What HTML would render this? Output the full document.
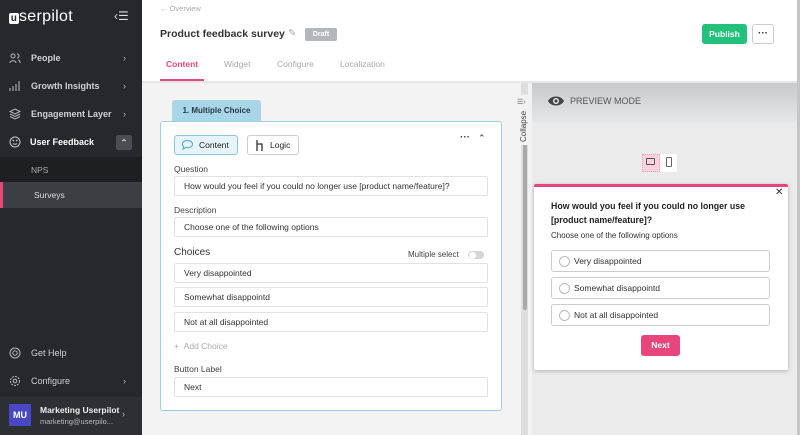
<!DOCTYPE html>
<html><head><meta charset="utf-8"><style>
*{box-sizing:border-box;margin:0;padding:0}
body{width:800px;height:435px;overflow:hidden;font-family:"Liberation Sans",sans-serif;background:#f3f3f3;position:relative;font-size:9px;color:#333}
.a{position:absolute}
.sb{left:0;top:0;width:142px;height:435px;background:#25282d;color:#cfd1d4}
.nav{position:absolute;left:0;width:142px;height:26px;font-size:9px;font-weight:bold;display:flex;align-items:center;padding-left:31px}
.nav .ch{position:absolute;right:16px;font-weight:normal;color:#bbb}
.nav .ic{position:absolute;left:9px;top:7px;width:12px;height:12px}
.inp{position:absolute;left:174px;width:314px;height:20px;background:#fff;border:1px solid #e2e2e2;border-radius:2px;font-size:8.5px;padding-left:9px;line-height:18px;color:#333}
.lbl{position:absolute;left:174px;font-size:8.5px;color:#444}
.opt{position:absolute;left:551px;width:219px;height:22px;border:1px solid #ccc;border-radius:3px;background:#fff;font-size:8.5px;line-height:20px;padding-left:22px}
.opt:before{content:"";position:absolute;left:7px;top:5px;width:9px;height:9px;border:1px solid #bbb;border-radius:50%}
</style></head><body>
<div class="a sb">
 <div class="a" style="left:9px;top:8px;font-size:16px;color:#fff;letter-spacing:.3px"><span style="display:inline-block;width:10px;height:11px;background:#fff;color:#25282d;font-size:10px;line-height:11px;text-align:center;border-radius:2px;font-weight:bold">u</span>serpilot</div>
 <div class="a" style="left:114px;top:9px;font-size:12px;color:#ddd">‹☰</div>
 <div class="nav" style="top:45px"><svg class="ic" viewBox="0 0 12 12" fill="none" stroke="#bbb"><circle cx="4" cy="4" r="2"/><path d="M1 11c0-3 6-3 6 0M8 2a2 2 0 010 4M9 8c2 0 2 2 2 3"/></svg>People<span class="ch">›</span></div>
 <div class="nav" style="top:73px"><svg class="ic" viewBox="0 0 12 12" stroke="#bbb"><path d="M1 11v-3M4 11v-5M7 11v-7M10 11v-10"/></svg>Growth Insights<span class="ch">›</span></div>
 <div class="nav" style="top:101px"><svg class="ic" viewBox="0 0 12 12" fill="none" stroke="#bbb"><path d="M6 1l5 2.5-5 2.5-5-2.5zM1 6l5 2.5 5-2.5M1 8.5l5 2.5 5-2.5"/></svg>Engagement Layer<span class="ch">›</span></div>
 <div class="nav" style="top:129px;color:#fff;padding-left:30px"><svg class="ic" viewBox="0 0 12 12" fill="none" stroke="#ccc"><circle cx="6" cy="6" r="5"/><path d="M4 7.5c1 1 3 1 4 0"/><circle cx="4.3" cy="4.5" r=".4"/><circle cx="7.7" cy="4.5" r=".4"/></svg>User Feedback<span style="position:absolute;left:116px;top:6px;width:16px;height:15px;background:#4a4d52;border-radius:2px;text-align:center;color:#ddd;font-size:8px;line-height:15px">⌃</span></div>
 <div class="a" style="left:0;top:157px;width:142px;height:25px;background:#1d1f23;font-size:8.5px;color:#aaa;padding:8px 0 0 31px">NPS</div>
 <div class="a" style="left:0;top:182px;width:142px;height:26px;background:#3b3e43;font-size:8.5px;color:#ddd;padding:8px 0 0 31px;border-left:3px solid #e8457a">Surveys</div>
 <div class="nav" style="top:340px;font-weight:normal"><svg class="ic" viewBox="0 0 12 12" fill="none" stroke="#bbb"><circle cx="6" cy="6" r="5"/><circle cx="6" cy="6" r="2.2"/></svg>Get Help</div>
 <div class="nav" style="top:368px;font-weight:normal"><svg class="ic" viewBox="0 0 12 12" fill="none" stroke="#bbb"><circle cx="6" cy="6" r="4.5" stroke-dasharray="2 1"/><circle cx="6" cy="6" r="1.8"/></svg>Configure<span class="ch">›</span></div>
 <div class="a" style="left:0;top:397px;width:142px;height:38px;background:#2c2f34"></div>
 <div class="a" style="left:9px;top:404px;width:22px;height:22px;background:#4a47c4;color:#fff;font-size:9px;font-weight:bold;text-align:center;line-height:22px">MU</div>
 <div class="a" style="left:40px;top:405px;font-size:8.5px;font-weight:bold;color:#eee">Marketing Userpilot</div>
 <div class="a" style="left:40px;top:417px;font-size:7.5px;color:#bbb">marketing@userpilo...</div>
 <div class="a" style="left:122px;top:409px;color:#bbb">›</div>
</div>
<div class="a" style="left:142px;top:0;width:658px;height:83px;background:#fff;border-bottom:2px solid #e6e6e6"></div>
<div class="a" style="left:160px;top:4px;font-size:7.5px;color:#aaa">← Overview</div>
<div class="a" style="left:160px;top:28px;font-size:10.5px;font-weight:bold;color:#333">Product feedback survey</div>
<div class="a" style="left:288px;top:28px;color:#aaa;font-size:10px">✎</div>
<div class="a" style="left:305px;top:28px;width:32px;height:13px;background:#b3b6ba;border-radius:2px;color:#fff;font-size:7px;font-weight:bold;text-align:center;line-height:13px">Draft</div>
<div class="a" style="left:702px;top:24px;width:45px;height:20px;background:#22c17c;border-radius:3px;color:#fff;font-size:8.5px;font-weight:bold;text-align:center;line-height:20px">Publish</div>
<div class="a" style="left:752px;top:24px;width:22px;height:20px;border:1px solid #ccc;border-radius:3px;background:#fff;font-size:10px;text-align:center;line-height:18px;font-weight:bold">···</div>
<div class="a" style="left:166px;top:59px;font-size:8.5px;font-weight:bold;color:#e8457a">Content</div>
<div class="a" style="left:160px;top:79px;width:44px;height:2px;background:#e8457a"></div>
<div class="a" style="left:224px;top:59px;font-size:8.5px;color:#aaa">Widget</div>
<div class="a" style="left:277px;top:59px;font-size:8.5px;color:#aaa">Configure</div>
<div class="a" style="left:340px;top:59px;font-size:8.5px;color:#aaa">Localization</div>

<div class="a" style="left:172px;top:100px;width:89px;height:22px;background:#a9d5e8;border-radius:3px 3px 0 0;font-size:8px;font-weight:bold;color:#2a3a45;text-align:center;line-height:21px">1. Multiple Choice</div>
<div class="a" style="left:160px;top:121px;width:342px;height:290px;background:#fff;border:1px solid #9fd0e5;border-radius:3px"></div>
<div class="a" style="left:174px;top:135px;width:64px;height:20px;background:#e6f4fa;border:1px solid #8cc6de;border-radius:3px;font-size:8.5px;line-height:18px;padding-left:24px;color:#222">Content<svg style="position:absolute;left:6px;top:3px" width="13" height="12" viewBox="0 0 13 12" fill="none" stroke="#4aa8d0"><path d="M6.5 1.5c3 0 5 1.6 5 3.6s-2 3.6-5 3.6c-.6 0-1.2-.1-1.7-.2L2 10.2l.8-2.2C1.9 7.3 1.5 6.3 1.5 5.1c0-2 2-3.6 5-3.6z"/></svg></div>
<div class="a" style="left:247px;top:135px;width:52px;height:20px;background:#fff;border:1px solid #ccc;border-radius:3px;font-size:8.5px;line-height:18px;padding-left:22px;color:#222">Logic<svg style="position:absolute;left:7px;top:3px" width="10" height="13" viewBox="0 0 10 13" fill="none" stroke="#333" stroke-width="1.3"><path d="M2 1v11M2 5h5v7"/></svg></div>
<div class="a" style="left:460px;top:132px;font-size:10px;font-weight:bold;color:#444">···</div>
<div class="a" style="left:478px;top:133px;font-size:9px;color:#333">⌃</div>
<div class="lbl" style="top:164px">Question</div>
<div class="inp" style="top:176px">How would you feel if you could no longer use [product name/feature]?</div>
<div class="lbl" style="top:205px">Description</div>
<div class="inp" style="top:217px">Choose one of the following options</div>
<div class="lbl" style="top:247px;font-size:10px;color:#333">Choices</div>
<div class="a" style="left:408px;top:250px;font-size:8px;color:#444">Multiple select</div>
<div class="a" style="left:468px;top:251px;width:16px;height:8px;background:#d6d6d6;border-radius:4px"><div style="width:7px;height:7px;margin:.5px;background:#fff;border-radius:50%"></div></div>
<div class="inp" style="top:263px">Very disappointed</div>
<div class="inp" style="top:287px">Somewhat disappointd</div>
<div class="inp" style="top:312px">Not at all disappointed</div>
<div class="a" style="left:174px;top:341px;font-size:8.5px;color:#aaa">+ &nbsp;Add Choice</div>
<div class="lbl" style="top:364px">Button Label</div>
<div class="inp" style="top:377px">Next</div>

<div class="a" style="left:521px;top:83px;width:7px;height:352px;background:#dedede"></div>
<div class="a" style="left:523px;top:100px;width:4px;height:210px;background:#aaa;border-radius:2px"></div>
<div class="a" style="left:515px;top:95px;width:17px;height:50px;background:#f2f2f2;border-radius:6px 0 0 6px"></div>
<div class="a" style="left:517px;top:98px;font-size:7px;color:#666">☰›</div>
<div class="a" style="font-size:8px;color:#444;transform:rotate(-90deg);transform-origin:left top;width:40px;left:519px;top:142px">Collapse</div>
<div class="a" style="left:532px;top:83px;width:265px;height:352px;background:#ebebeb"></div>
<div class="a" style="left:532px;top:83px;width:265px;height:40px;background:linear-gradient(#c8c9cb,#e6e7e8)"></div>
<svg class="a" style="left:547px;top:95px" width="18" height="12" viewBox="0 0 18 12"><path d="M1 6c3-6 13-6 16 0-3 6-13 6-16 0z" fill="#444"/><circle cx="9" cy="6" r="3" fill="#eee"/><circle cx="9" cy="6" r="1.6" fill="#444"/></svg>
<div class="a" style="left:570px;top:96px;font-size:9px;color:#555">PREVIEW MODE</div>
<div class="a" style="left:642px;top:154px;width:18px;height:18px;background:#f9d3e0;border:1px dotted #f0a0bb"></div>
<div class="a" style="left:646px;top:158px;width:9px;height:7px;border:1.2px solid #555;border-radius:1px"></div>
<div class="a" style="left:660px;top:154px;width:17px;height:18px;background:#fff"></div>
<div class="a" style="left:666px;top:157px;width:6px;height:10px;border:1.2px solid #666;border-radius:1px"></div>
<div class="a" style="left:797px;top:0;width:3px;height:435px;background:#c5c5c5"></div>

<div class="a" style="left:534px;top:184px;width:254px;height:186px;background:#fff;border-top:3px solid #e8457a;border-radius:2px;box-shadow:0 1px 4px rgba(0,0,0,.25)"></div>
<div class="a" style="left:775px;top:187px;font-size:10px;color:#333">✕</div>
<div class="a" style="left:551px;top:199px;font-size:8.8px;font-weight:bold;color:#222;line-height:14px;width:220px">How would you feel if you could no longer use [product name/feature]?</div>
<div class="a" style="left:551px;top:231px;font-size:8px;color:#333">Choose one of the following options</div>
<div class="opt" style="top:250px">Very disappointed</div>
<div class="opt" style="top:277px">Somewhat disappointd</div>
<div class="opt" style="top:304px">Not at all disappointed</div>
<div class="a" style="left:641px;top:335px;width:39px;height:21px;background:#e8457a;border-radius:3px;color:#fff;font-size:8.5px;font-weight:bold;text-align:center;line-height:21px">Next</div>
</body></html>
